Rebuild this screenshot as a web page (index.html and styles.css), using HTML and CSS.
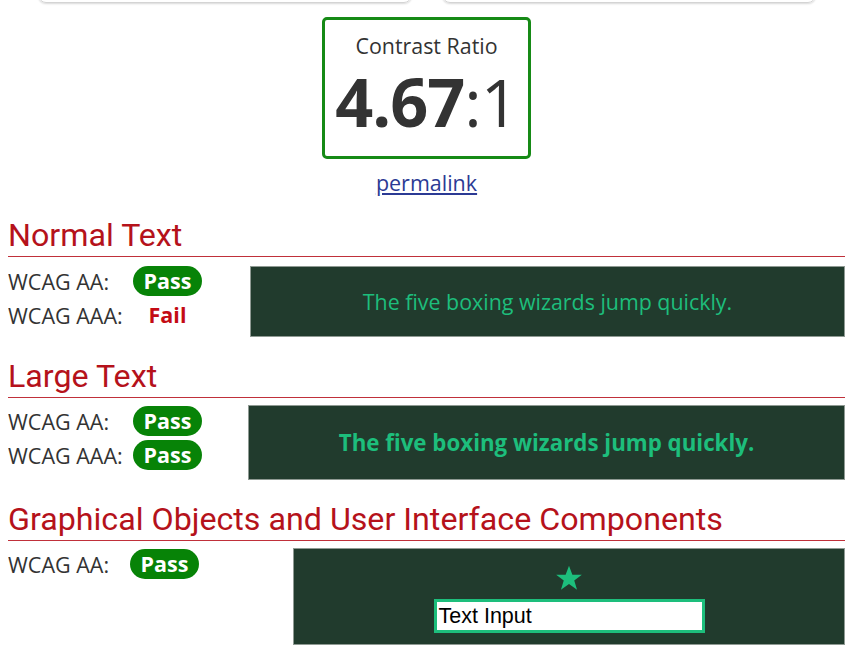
FILE: index.html
```html
<!DOCTYPE html>
<html lang="en">
<head>
    <meta charset="UTF-8">
    <meta name="viewport" content="width=device-width, initial-scale=1.0">
    <title>Contrast Checker</title>
    <link rel="stylesheet" href="styles.css">
</head>
<body>
    <div class="color-inputs">
        <div class="color-field"></div>
        <div class="color-field"></div>
    </div>

    <div class="ratio-wrap">
        <div class="ratio-box">
            <p class="ratio-label">Contrast Ratio</p>
            <p class="ratio-value"><b>4.67</b>:1</p>
        </div>
        <a href="#" class="permalink">permalink</a>
    </div>

    <section class="result">
        <h2>Normal Text</h2>
        <div class="result-body">
            <div class="levels normal">
                <div class="level"><span class="level-name">WCAG AA:</span><span class="badge pass">Pass</span></div>
                <div class="level"><span class="level-name">WCAG AAA:</span><span class="badge fail">Fail</span></div>
            </div>
            <div class="sample sample-normal">The five boxing wizards jump quickly.</div>
        </div>
    </section>

    <section class="result">
        <h2>Large Text</h2>
        <div class="result-body">
            <div class="levels large">
                <div class="level"><span class="level-name">WCAG AA:</span><span class="badge pass">Pass</span></div>
                <div class="level"><span class="level-name">WCAG AAA:</span><span class="badge pass">Pass</span></div>
            </div>
            <div class="sample sample-large">The five boxing wizards jump quickly.</div>
        </div>
    </section>

    <section class="result">
        <h2>Graphical Objects and User Interface Components</h2>
        <div class="result-body">
            <div class="levels graphics">
                <div class="level"><span class="level-name short">WCAG AA:</span><span class="badge pass">Pass</span></div>
            </div>
            <div class="sample sample-graphics">
                <svg class="star" width="28" height="28" viewBox="0 0 24 24">
                    <polygon points="12,1.5 14.9,9.2 23,9.2 16.5,14.1 18.9,22 12,17.2 5.1,22 7.5,14.1 1,9.2 9.1,9.2" fill="#1dbe7c"/>
                </svg>
                <div class="fake-input">Text Input</div>
            </div>
        </div>
    </section>
</body>
</html>
```

FILE: styles.css
```css
body {
    font-family: "Open Sans", sans-serif;
    margin: 0 15px 0 8px;
    padding: 0;
    background-color: #fff;
    color: #333;
}

.color-inputs {
    display: flex;
    justify-content: center;
    gap: 30px;
    margin-top: -37px;
}

.color-field {
    width: 372px;
    height: 38px;
    border: 1px solid #d4d4d4;
    border-radius: 8px;
    box-shadow: 0 1px 2px rgba(0, 0, 0, 0.15);
}

.ratio-wrap {
    display: flex;
    flex-direction: column;
    align-items: center;
    margin-top: 14px;
}

.ratio-box {
    width: 203px;
    height: 136px;
    border: 3px solid #168a16;
    border-radius: 5px;
    text-align: center;
}

.ratio-label {
    margin: 12px 0 0;
    font-size: 21.4px;
    line-height: 28px;
}

.ratio-value {
    margin: 4px 0 0;
    font-size: 66.5px;
    line-height: 74px;
    letter-spacing: -1px;
}

.ratio-value b {
    font-weight: 700;
}

.permalink {
    margin-top: 9px;
    font-size: 21.5px;
    line-height: 30px;
    color: #2b3a94;
}

.result h2 {
    font-family: Roboto, sans-serif;
    font-weight: 400;
    font-size: 32.2px;
    line-height: 38px;
    color: #b5121b;
    margin: 0;
    padding-bottom: 2px;
    border-bottom: 1px solid #c0303a;
}

.result:nth-of-type(1) h2 {
    margin-top: 18px;
}

.result:nth-of-type(2) h2 {
    margin-top: 20px;
}

.result:nth-of-type(3) h2 {
    margin-top: 20px;
}

.result-body {
    display: flex;
    align-items: flex-start;
    margin-top: 7px;
}

.result:nth-of-type(1) .result-body {
    margin-top: 9px;
}

.levels {
    flex-shrink: 0;
    display: flex;
    flex-direction: column;
    gap: 4px;
}

.levels.normal {
    width: 242px;
}

.levels.large {
    width: 240px;
    padding-top: 1px;
}

.levels.graphics {
    width: 285px;
    padding-top: 1px;
}

.level {
    display: flex;
    align-items: center;
    height: 30px;
    font-size: 21.5px;
}

.level-name {
    width: 125px;
}

.level-name.short {
    width: 122px;
}

.badge {
    display: inline-block;
    width: 69px;
    font-weight: 700;
    font-size: 21.5px;
    line-height: 30px;
    text-align: center;
}

.badge.pass {
    border-radius: 15px;
    background-color: #078307;
    color: #fff;
}

.badge.fail {
    color: #c40b14;
}

.sample {
    flex: 1;
    background-color: #213b2d;
    border: 1px solid #8f9a93;
    color: #1dbe7c;
    text-align: center;
}

.sample-normal {
    height: 69px;
    line-height: 69px;
    font-size: 21.4px;
}

.sample-large {
    height: 73px;
    line-height: 73px;
    font-size: 22.3px;
    font-weight: 700;
}

.sample-graphics {
    height: 95px;
    display: flex;
    flex-direction: column;
    align-items: center;
}

.star {
    margin-top: 15px;
}

.fake-input {
    width: 263px;
    height: 28px;
    margin-top: 7px;
    border: 3px solid #1dbe7c;
    background-color: #fff;
    color: #000;
    font-family: "Liberation Sans", Arial, sans-serif;
    font-size: 21.5px;
    line-height: 28px;
    text-align: left;
    padding-left: 2px;
}
```
